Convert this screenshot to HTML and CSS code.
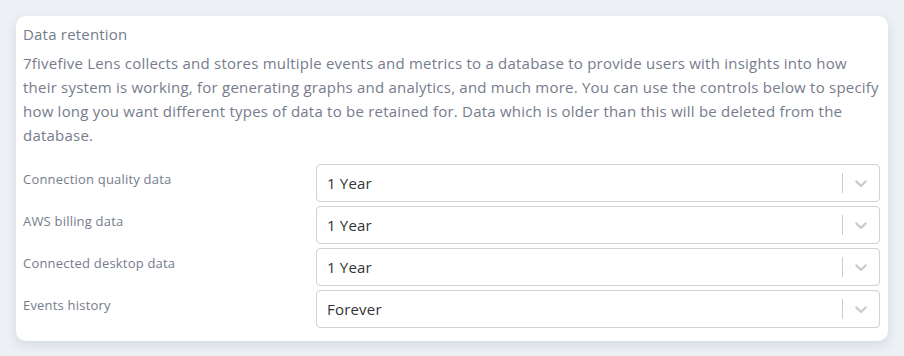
FILE: index.html
```html
<!DOCTYPE html>
<html lang="en">
<head>
    <meta charset="UTF-8">
    <title>Data retention</title>
    <link rel="stylesheet" href="styles.css">
</head>
<body>
    <div class="card">
        <div class="card-title">Data retention</div>
        <p class="card-text">7fivefive Lens collects and stores multiple events and metrics to a database to provide users with insights into how their system is working, for generating graphs and analytics, and much more. You can use the controls below to specify how long you want different types of data to be retained for. Data which is older than this will be deleted from the database.</p>

        <div class="setting-row">
            <label class="setting-label">Connection quality data</label>
            <div class="select">
                <div class="select-value">1 Year</div>
                <span class="select-separator"></span>
                <div class="select-indicator">
                    <svg width="20" height="20" viewBox="0 0 20 20"><path d="M4.516 7.548c0.436-0.446 1.043-0.481 1.576 0l3.908 3.747 3.908-3.747c0.533-0.481 1.141-0.446 1.574 0 0.436 0.445 0.408 1.197 0 1.615-0.406 0.418-4.695 4.502-4.695 4.502-0.217 0.223-0.502 0.335-0.787 0.335s-0.57-0.112-0.789-0.335c0 0-4.287-4.084-4.695-4.502s-0.436-1.17 0-1.615z"></path></svg>
                </div>
            </div>
        </div>

        <div class="setting-row">
            <label class="setting-label">AWS billing data</label>
            <div class="select">
                <div class="select-value">1 Year</div>
                <span class="select-separator"></span>
                <div class="select-indicator">
                    <svg width="20" height="20" viewBox="0 0 20 20"><path d="M4.516 7.548c0.436-0.446 1.043-0.481 1.576 0l3.908 3.747 3.908-3.747c0.533-0.481 1.141-0.446 1.574 0 0.436 0.445 0.408 1.197 0 1.615-0.406 0.418-4.695 4.502-4.695 4.502-0.217 0.223-0.502 0.335-0.787 0.335s-0.57-0.112-0.789-0.335c0 0-4.287-4.084-4.695-4.502s-0.436-1.170 0-1.615z"></path></svg>
                </div>
            </div>
        </div>

        <div class="setting-row">
            <label class="setting-label">Connected desktop data</label>
            <div class="select">
                <div class="select-value">1 Year</div>
                <span class="select-separator"></span>
                <div class="select-indicator">
                    <svg width="20" height="20" viewBox="0 0 20 20"><path d="M4.516 7.548c0.436-0.446 1.043-0.481 1.576 0l3.908 3.747 3.908-3.747c0.533-0.481 1.141-0.446 1.574 0 0.436 0.445 0.408 1.197 0 1.615-0.406 0.418-4.695 4.502-4.695 4.502-0.217 0.223-0.502 0.335-0.787 0.335s-0.57-0.112-0.789-0.335c0 0-4.287-4.084-4.695-4.502s-0.436-1.170 0-1.615z"></path></svg>
                </div>
            </div>
        </div>

        <div class="setting-row">
            <label class="setting-label">Events history</label>
            <div class="select">
                <div class="select-value">Forever</div>
                <span class="select-separator"></span>
                <div class="select-indicator">
                    <svg width="20" height="20" viewBox="0 0 20 20"><path d="M4.516 7.548c0.436-0.446 1.043-0.481 1.576 0l3.908 3.747 3.908-3.747c0.533-0.481 1.141-0.446 1.574 0 0.436 0.445 0.408 1.197 0 1.615-0.406 0.418-4.695 4.502-4.695 4.502-0.217 0.223-0.502 0.335-0.787 0.335s-0.57-0.112-0.789-0.335c0 0-4.287-4.084-4.695-4.502s-0.436-1.170 0-1.615z"></path></svg>
                </div>
            </div>
        </div>
    </div>
</body>
</html>
```

FILE: styles.css
```css
body {
    margin: 0;
    padding: 16px;
    background-color: #edf1f5;
    font-family: 'Open Sans', sans-serif;
}

.card {
    background: #fff;
    border-radius: 10px;
    box-shadow: 0 4px 12px rgba(40, 50, 70, 0.12);
    padding: 6px 8px 13px 7px;
    width: 857px;
}

.card-title {
    color: #767c8c;
    font-size: 15px;
    line-height: 24px;
    letter-spacing: 0.2px;
}

.card-text {
    color: #767c8c;
    font-size: 15px;
    line-height: 24px;
    letter-spacing: 0.22px;
    margin: 5px -3px 17px 0;
}

.setting-row {
    display: grid;
    grid-template-columns: 293px 1fr;
    margin-top: 4px;
}

.setting-label {
    color: #767c8c;
    font-size: 13px;
    line-height: 18px;
    letter-spacing: 0.2px;
    padding-top: 6px;
}

.select {
    display: flex;
    align-items: center;
    height: 36px;
    border: 1px solid #cfd2d6;
    border-radius: 4px;
    background: #fff;
}

.select-value {
    flex: 1;
    padding: 0 10px;
    color: #333;
    font-size: 15px;
    letter-spacing: 0.2px;
}

.select-separator {
    width: 1px;
    height: 20px;
    background: #ccc;
}

.select-indicator {
    padding: 8px;
    display: flex;
}

.select-indicator svg {
    fill: #ccc;
}
```
